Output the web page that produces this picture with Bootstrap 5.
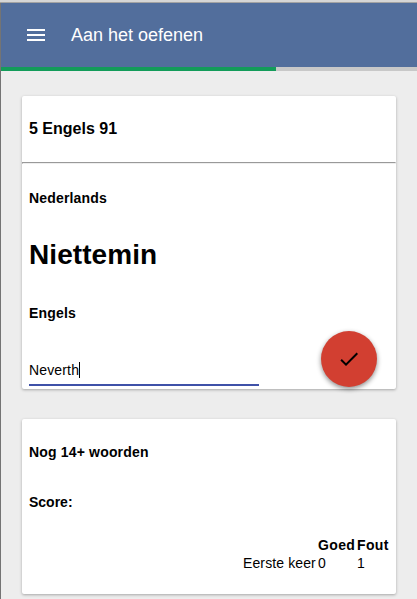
<!DOCTYPE html>
<html lang="nl">
<head>
<meta charset="utf-8">
<meta name="viewport" content="width=device-width, initial-scale=1">
<title>Aan het oefenen</title>
<link href="https://cdn.jsdelivr.net/npm/bootstrap@5.3.0/dist/css/bootstrap.min.css" rel="stylesheet">
<style>
body { font-family: "Liberation Sans", Arial, sans-serif; font-size: 14px; line-height: 16px; color: #000; background: #ededed; height: 599px; overflow: hidden; }
.window-top { height: 3px; background: #d6d6d6; border-bottom: 1px solid #a3a3a3; }
.window-body { height: 596px; border-left: 1px solid #747474; }
.app-bar { height: 64px; background: #526e9c; padding: 0 25px; }
.app-title { font-size: 18px; line-height: 24px; margin-left: 26px; }
.app-progress { height: 4px; background: #c8c8c8; border-radius: 0; }
.app-progress .progress-bar { background: #139c5a; }
.practice { padding: 25px 21px 0; }
.paper { border: 0; border-radius: 2px; color: #000; box-shadow: 0 1px 3px rgba(0,0,0,.3); }
.list-title { font-size: 16px; line-height: 18px; padding: 24px 7px; height: 66px; }
.rule { height: 2px; border: 1px solid; border-color: #999 #eee #eee #999; }
.question { height: 225px; padding: 26px 7px 0; }
.field-label { letter-spacing: .17px; }
.word { font-size: 28px; line-height: 32px; margin: 33px 0 34px; letter-spacing: .08px; }
.answer-row { margin-top: 10px; }
.answer { width: 230px; height: 24px; margin-top: 31px; border-bottom: 2px solid #3f51a8; letter-spacing: .15px; }
.caret { width: 1px; height: 16px; background: #000; }
.check-btn { width: 56px; height: 56px; margin-right: 12px; background: #d23f31; box-shadow: 0 2px 5px rgba(0,0,0,.45); }
.score-card { height: 175px; margin-top: 30px; padding: 25px 7px 0; }
.score-label { margin-top: 34px; }
.score-table { width: 152px; table-layout: fixed; border-collapse: separate; border-spacing: 2px 0; margin-top: 26px; margin-right: -4px; white-space: nowrap; }
.score-table th, .score-table td { padding: 1px 0; letter-spacing: .12px; }
.score-table th { letter-spacing: .35px; }
.col-good { width: 37px; }
.col-wrong { width: 34px; }
</style>
<script src="https://cdn.jsdelivr.net/npm/bootstrap@5.3.0/dist/js/bootstrap.bundle.min.js"></script>
</head>
<body>
<div class="window-top"></div>
<div class="window-body">
  <header class="app-bar d-flex align-items-center text-white">
    <svg width="19" height="12" viewBox="0 0 19 12" fill="#fff" shape-rendering="crispEdges" aria-hidden="true"><path d="M1 0h18v2H1zM1 5h18v2H1zM1 10h18v2H1z"/></svg>
    <span class="app-title">Aan het oefenen</span>
  </header>
  <div class="progress app-progress"><div class="progress-bar" style="width:66.1%"></div></div>
  <main class="practice">
    <section class="card paper">
      <div class="list-title fw-bold">5 Engels 91</div>
      <div class="rule"></div>
      <div class="question">
        <div class="field-label fw-bold">Nederlands</div>
        <div class="word fw-bold">Niettemin</div>
        <div class="field-label fw-bold">Engels</div>
        <div class="answer-row d-flex justify-content-between">
          <div class="answer d-flex"><span>Neverth</span><span class="caret"></span></div>
          <button type="button" class="btn check-btn rounded-circle border-0 p-0 d-flex align-items-center justify-content-center" aria-label="Controleer">
            <svg width="24" height="24" viewBox="0 0 24 24" aria-hidden="true"><path d="M9 16.17L4.83 12l-1.42 1.41L9 19 21 7l-1.41-1.41z"/></svg>
          </button>
        </div>
      </div>
    </section>
    <section class="card paper score-card">
      <div class="field-label fw-bold">Nog 14+ woorden</div>
      <div class="score-label fw-bold">Score:</div>
      <table class="score-table align-self-end">
        <tr><th></th><th class="col-good">Goed</th><th class="col-wrong">Fout</th></tr>
        <tr><td>Eerste keer</td><td>0</td><td>1</td></tr>
      </table>
    </section>
  </main>
</div>
</body>
</html>
